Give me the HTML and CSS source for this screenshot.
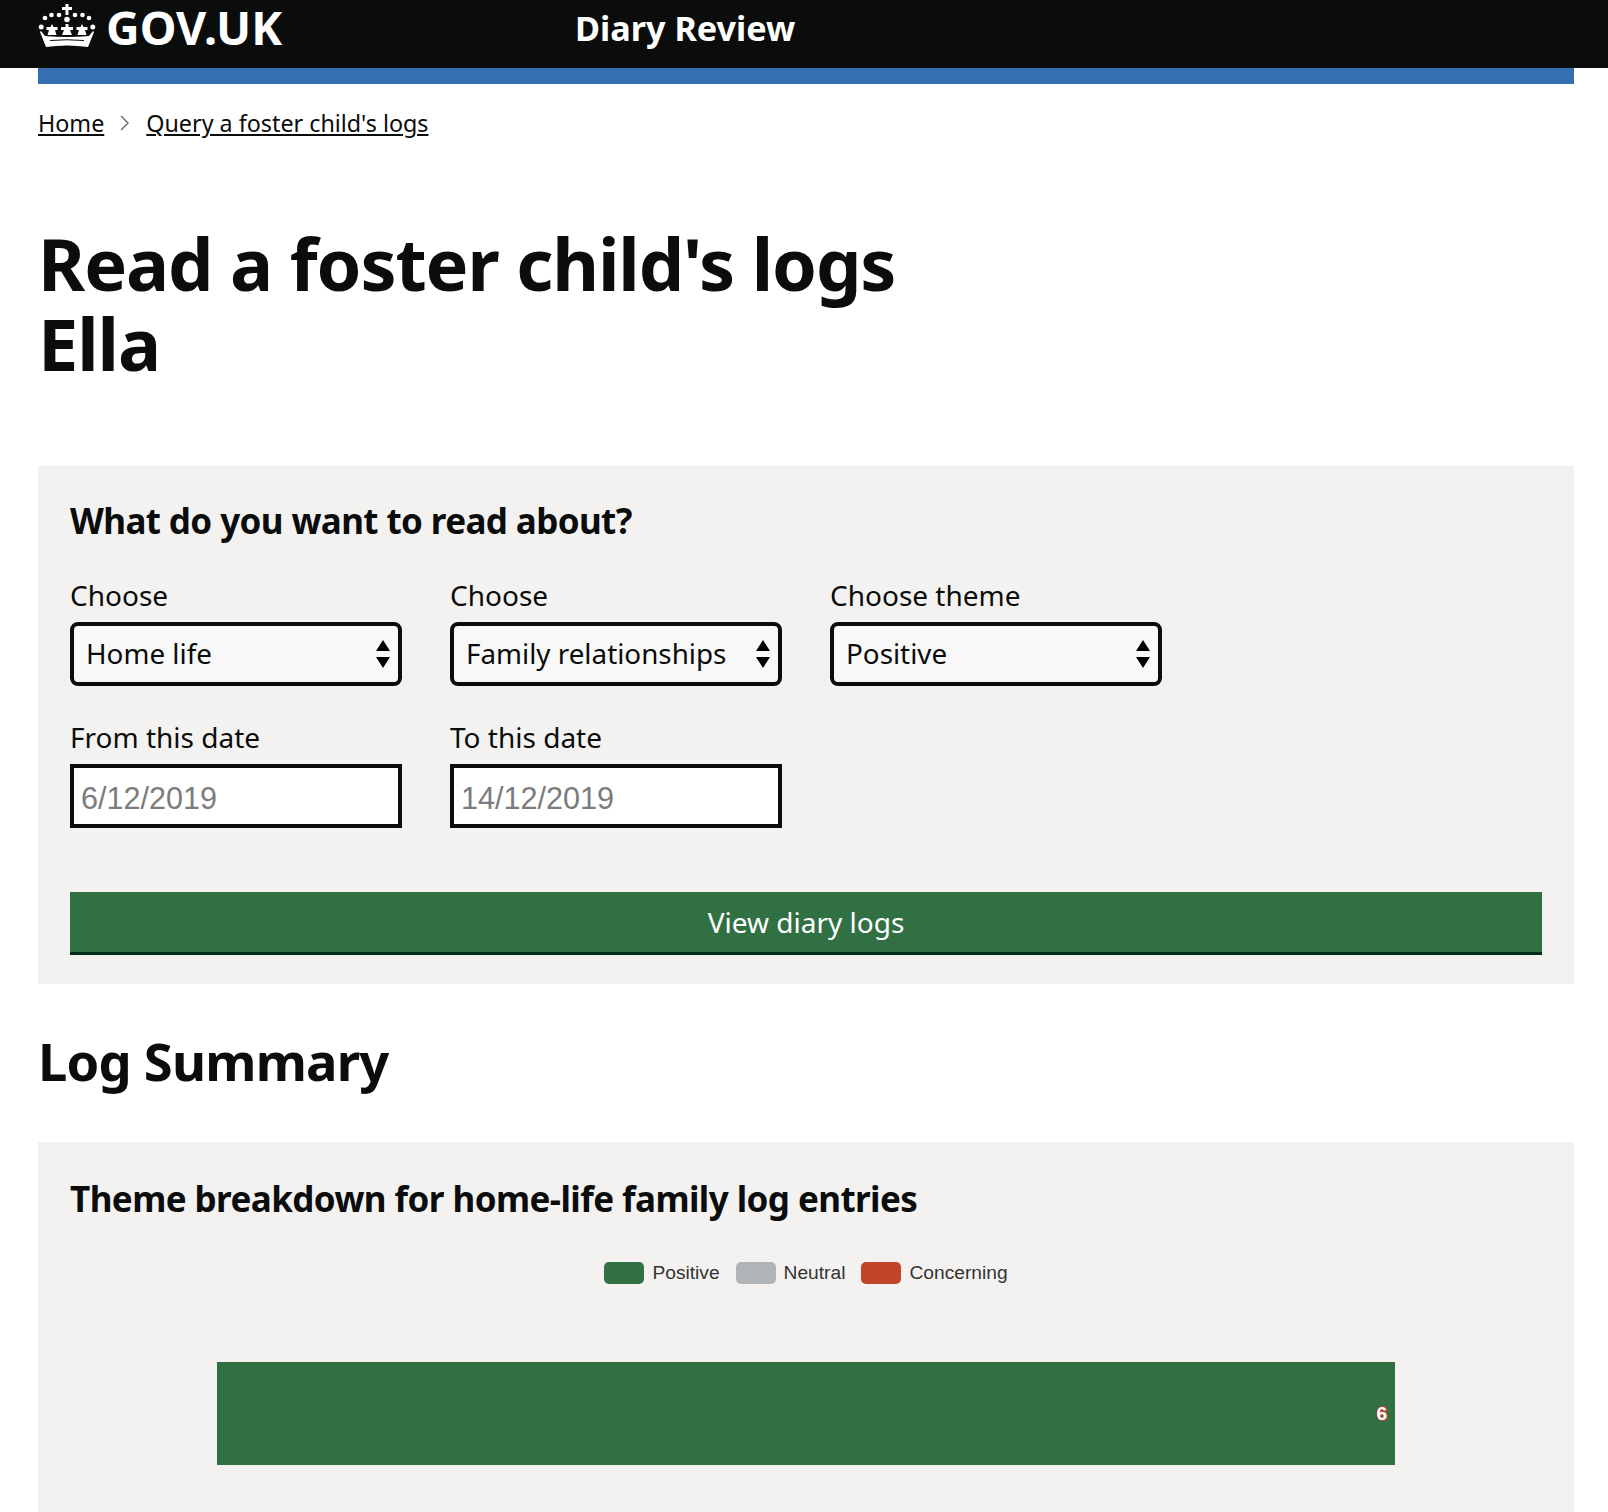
FILE: index.html
```html
<!DOCTYPE html>
<html>
<head>
    <meta charset="utf-8"/>
    <title>Diary Review</title>
    <link rel="stylesheet" href="styles.css">
</head>
<body>
    <header class="topbar">
        <a class="logo" href="#">
            <svg class="crown" viewBox="0 0 58 44" width="58" height="44">
                <g fill="#fff">
                    <path d="M27.5 0h3v3h3.5v3h-3.5v5h-3V6H24V3h3.5z"/>
                    <circle cx="29" cy="15.5" r="2.8"/>
                    <circle cx="21" cy="11" r="2.3"/>
                    <circle cx="37" cy="11" r="2.3"/>
                    <circle cx="13.5" cy="11" r="2.3"/>
                    <circle cx="44.5" cy="11" r="2.3"/>
                    <circle cx="7" cy="14" r="2.3"/>
                    <circle cx="51" cy="14" r="2.3"/>
                    <circle cx="3.2" cy="23" r="2.5"/>
                    <circle cx="54.8" cy="23" r="2.5"/>
                    <path d="M27.5 20h3v3h4.5v3h-3l2 5h-10l2-5h-3v-3h4.5z"/>
                    <path d="M14 20l1.5 3h4v3h-2.5l1.5 5h-9l1.5-5H8.5v-3h4z"/>
                    <path d="M44 20l-1.5 3h-4v3h2.5l-1.5 5h9l-1.5-5h2.5v-3h-4z"/>
                    <path d="M3 27l4 5q22 2 44 0l4-5 1 1-6 15q-21-3-42 0L2 28z"/>
                </g>
                <path d="M12 36.500q17-1.500 34 0" fill="none" stroke="#0b0c0c" stroke-width="1"/>
            </svg>
            <span class="logo-text">GOV.UK</span>
        </a>
        <span class="service">Diary Review</span>
    </header>
    <div class="wrap">
        <div class="blue-bar"></div>
        <nav class="crumbs">
            <a href="#">Home</a>
            <svg class="chev" viewBox="0 0 12 16" width="12" height="16"><path d="M2 1l7 7-7 7" fill="none" stroke="#6f7376" stroke-width="1.5"/></svg>
            <a href="#">Query a foster child's logs</a>
        </nav>
        <h1>Read a foster child's logs<br>Ella</h1>

        <form class="panel filters">
            <h2>What do you want to read about?</h2>
            <div class="row">
                <div class="field">
                    <label>Choose</label>
                    <div class="select"><span>Home life</span><svg class="updown" viewBox="0 0 14 28" width="14" height="28"><path d="M7 0l7 11H0zM0 17h14L7 28z"/></svg></div>
                </div>
                <div class="field">
                    <label>Choose</label>
                    <div class="select"><span>Family relationships</span><svg class="updown" viewBox="0 0 14 28" width="14" height="28"><path d="M7 0l7 11H0zM0 17h14L7 28z"/></svg></div>
                </div>
                <div class="field">
                    <label>Choose theme</label>
                    <div class="select"><span>Positive</span><svg class="updown" viewBox="0 0 14 28" width="14" height="28"><path d="M7 0l7 11H0zM0 17h14L7 28z"/></svg></div>
                </div>
            </div>
            <div class="row">
                <div class="field">
                    <label>From this date</label>
                    <div class="date">6/12/2019</div>
                </div>
                <div class="field">
                    <label>To this date</label>
                    <div class="date">14/12/2019</div>
                </div>
            </div>
            <button type="button" class="btn">View diary logs</button>
        </form>

        <h2 class="summary">Log Summary</h2>

        <section class="panel chart">
            <h3>Theme breakdown for home-life family log entries</h3>
            <ul class="legend">
                <li><i class="swatch green"></i>Positive</li>
                <li><i class="swatch grey"></i>Neutral</li>
                <li><i class="swatch red"></i>Concerning</li>
            </ul>
            <div class="bar"><span>6</span></div>
        </section>
    </div>
</body>
</html>
```

FILE: styles.css
```css
html, body {
    margin: 0;
    height: 1512px;
    overflow: hidden;
}
body {
    font-family: "Noto Sans", "Liberation Sans", sans-serif;
    color: #0b0c0c;
    background: #fff;
}
.topbar {
    display: flex;
    align-items: center;
    height: 68px;
    background: #0b0c0c;
    padding-left: 38px;
    color: #fff;
}
.logo {
    display: flex;
    align-items: center;
    gap: 10px;
    width: 537px;
    color: #fff;
    text-decoration: none;
}
.crown {
    margin-top: -16px;
}
.logo-text {
    font-size: 46.5px;
    font-weight: 700;
    line-height: 52px;
    margin-top: -14px;
}
.service {
    font-size: 34.2px;
    font-weight: 700;
    margin-top: -13px;
}
.wrap {
    margin: 0 34px 0 38px;
}
.blue-bar {
    height: 16px;
    background: #3670b2;
}
.crumbs {
    display: flex;
    align-items: center;
    gap: 15px;
    height: 28px;
    margin-top: 25px;
    font-size: 23.3px;
}
.crumbs a {
    color: #0b0c0c;
}
h1 {
    margin: 86px 0 0;
    font-size: 72px;
    line-height: 80px;
    font-weight: 700;
    letter-spacing: -1.1px;
}
.panel {
    background: #f3f2f1;
    padding: 32px;
}
.filters {
    margin-top: 83px;
    padding-top: 32px;
    padding-bottom: 29px;
}
.filters h2 {
    margin: 0 0 35px;
    font-size: 35px;
    line-height: 46px;
    letter-spacing: -0.6px;
}
.row {
    display: flex;
    gap: 48px;
    margin-bottom: 35px;
}
.field {
    width: 332px;
}
.field label {
    display: block;
    font-size: 28px;
    line-height: 32px;
    margin-bottom: 11px;
}
.select {
    display: flex;
    align-items: center;
    justify-content: space-between;
    box-sizing: border-box;
    height: 64px;
    padding: 0 8px 2px 12px;
    border: 4px solid #0b0c0c;
    border-radius: 8px;
    background: #f8f8f8;
    font-size: 27.8px;
}
.updown {
    margin-top: 2px;
}
.date {
    box-sizing: border-box;
    height: 64px;
    line-height: 60px;
    padding-left: 7px;
    border: 4px solid #0b0c0c;
    background: #fff;
    color: #7c7c7c;
    font-family: "Liberation Sans", sans-serif;
    font-size: 30.6px;
}
.btn {
    display: block;
    width: 100%;
    height: 63px;
    margin-top: 64px;
    border: 0;
    border-bottom: 3px solid #002d18;
    background: #307043;
    color: #fff;
    font-family: inherit;
    font-size: 28px;
    padding: 0;
}
.summary {
    margin: 42px 0 46px;
    font-size: 52.5px;
    line-height: 70px;
    letter-spacing: -0.8px;
}
.chart {
    height: 370px;
    padding-top: 34px;
}
.chart h3 {
    margin: 0;
    font-size: 35px;
    line-height: 46px;
    letter-spacing: -0.57px;
}
.legend {
    display: flex;
    justify-content: center;
    gap: 16px;
    margin: 39px 0 0;
    padding: 0;
    list-style: none;
    font-family: "Liberation Sans", Arial, sans-serif;
    font-size: 19.2px;
    line-height: 23px;
    color: #333;
}
.legend li {
    display: flex;
    align-items: center;
    gap: 8px;
}
.swatch {
    width: 40px;
    height: 22px;
    border-radius: 5px;
}
.green { background: #307043; }
.grey { background: #b1b4b6; }
.red { background: #c3432b; }
.bar {
    display: flex;
    align-items: center;
    justify-content: flex-end;
    height: 103px;
    margin: 78px 147px 0 147px;
    padding-right: 8px;
    background: #307043;
}
.bar span {
    font-family: "Liberation Sans", Arial, sans-serif;
    font-size: 19px;
    font-weight: 700;
    color: #fff;
    -webkit-text-stroke: 2px #c3432b;
    paint-order: stroke fill;
}
```
